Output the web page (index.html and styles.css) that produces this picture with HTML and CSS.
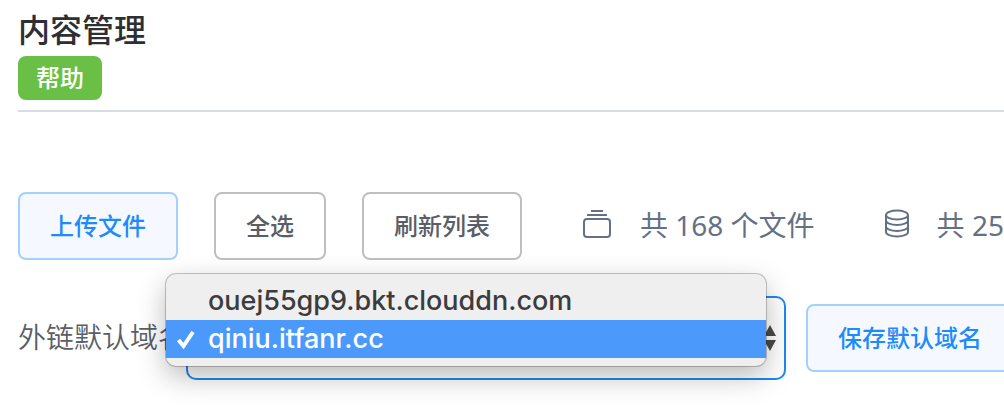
FILE: index.html
```html
<!DOCTYPE html>
<html lang="zh-CN">
<head>
<meta charset="utf-8">
<title>内容管理</title>
<link rel="stylesheet" href="styles.css">
</head>
<body>
<main class="page">
  <header class="header">
    <h1 class="title">内容管理</h1>
    <button class="help" type="button">帮助</button>
  </header>
  <section class="toolbar">
    <button class="btn btn-primary" type="button">上传文件</button>
    <button class="btn" type="button">全选</button>
    <button class="btn" type="button">刷新列表</button>
    <div class="stats">
      <div class="stat">
        <svg class="icon" width="30" height="30" viewBox="0 0 30 30" aria-hidden="true">
          <path d="M9 2h12M5 6h20"/>
          <rect x="2" y="10" width="26" height="18" rx="3"/>
        </svg>
        <span>共 168 个文件</span>
      </div>
      <div class="stat">
        <svg class="icon" width="24" height="30" viewBox="0 0 24 30" aria-hidden="true">
          <ellipse cx="12" cy="6" rx="11" ry="4.500"/>
          <path d="M1 6v17c0 2.500 4.900 4.500 11 4.500s11-2 11-4.500v-17M1 11.500c0 2.500 4.900 4.500 11 4.500s11-2 11-4.500M1 17.500c0 2.500 4.900 4.500 11 4.500s11-2 11-4.500"/>
        </svg>
        <span>共 25</span>
      </div>
    </div>
  </section>
  <section class="domain">
    <label class="label" for="domain">外链默认域名</label>
    <div class="picker">
      <select class="select" id="domain">
        <option>ouej55gp9.bkt.clouddn.com</option>
        <option selected>qiniu.itfanr.cc</option>
      </select>
      <svg class="arrows" width="12" height="28" viewBox="0 0 12 28" aria-hidden="true">
        <path d="M6 1l6 11H0zM6 27l6-11H0z"/>
      </svg>
      <div class="menu" role="listbox" aria-label="外链默认域名">
        <button class="option" type="button" role="option" aria-selected="false">ouej55gp9.bkt.clouddn.com</button>
        <button class="option option-active" type="button" role="option" aria-selected="true">
          <svg class="check" width="20" height="20" viewBox="0 0 20 20" aria-hidden="true"><path d="M2.500 11l5 6L17 3"/></svg>qiniu.itfanr.cc
        </button>
      </div>
    </div>
    <button class="btn btn-primary" type="button">保存默认域名</button>
  </section>
</main>
</body>
</html>
```
FILE: styles.css
```css
* {
  box-sizing: border-box;
}

body {
  margin: 0;
  background: #fff;
  color: #5a5e66;
  font-family: "Noto Sans", "Noto Sans CJK SC", sans-serif;
}

button,
select {
  font-family: inherit;
}

.page {
  min-height: 100vh;
  padding: 12px 0 0 18px;
  overflow: hidden;
}

.header {
  display: flex;
  flex-direction: column;
  align-items: flex-start;
  gap: 8px;
  padding-bottom: 10px;
  border-bottom: 2px solid #d8dce5;
}

.title {
  margin: 0;
  color: #2d2f33;
  font-size: 32px;
  font-weight: 500;
  line-height: 36px;
}

.help {
  height: 44px;
  padding: 0 18px;
  border: 0;
  border-radius: 8px;
  background: #6abf47;
  color: #fff;
  font-size: 24px;
  font-weight: 500;
  line-height: 44px;
}

.toolbar {
  display: flex;
  align-items: center;
  gap: 36px;
  margin-top: 80px;
  white-space: nowrap;
}

.btn {
  flex: none;
  height: 68px;
  padding: 0 30px 4px;
  border: 2px solid #bfbfbf;
  border-radius: 8px;
  background: #fff;
  color: #5a5e66;
  font-size: 24px;
  font-weight: 500;
  white-space: nowrap;
}

.btn-primary {
  border-color: #a3d0fd;
  background: #f5f9ff;
  color: #1f8bfa;
}

.stats {
  display: flex;
  gap: 70px;
  margin-left: 24px;
  padding-bottom: 4px;
  color: #657085;
  font-size: 28px;
}

.stat {
  display: flex;
  align-items: center;
  gap: 28px;
}

.icon {
  flex: none;
  fill: none;
  stroke: #657085;
  stroke-width: 2;
}

.domain {
  display: flex;
  align-items: center;
  margin-top: 36px;
}

.label {
  flex: none;
  padding-bottom: 4px;
  font-size: 28px;
  font-weight: 350;
}

.picker {
  position: relative;
  flex: none;
  width: 600px;
  margin-right: 20px;
}

.select {
  display: block;
  width: 100%;
  height: 84px;
  padding: 0 40px 0 20px;
  appearance: none;
  border: 2px solid #1f87f0;
  border-radius: 10px;
  background: #fff;
  color: #5a5e66;
  font-size: 28px;
}

.arrows {
  position: absolute;
  top: 28px;
  right: 10px;
  fill: #4a4a4a;
}

.menu {
  position: absolute;
  top: -22px;
  left: -20px;
  width: 100%;
  padding: 8px 0;
  border-radius: 10px;
  background: #efefef;
  box-shadow: 0 0 0 1px rgba(0, 0, 0, 0.22), 0 10px 28px rgba(0, 0, 0, 0.28);
}

.option {
  position: relative;
  display: block;
  width: 100%;
  height: 38px;
  padding: 0 42px;
  border: 0;
  background: transparent;
  color: #3c3c3c;
  font-family: Inter, sans-serif;
  font-size: 27px;
  font-weight: 450;
  line-height: 36px;
  text-align: left;
}

.option-active {
  background: #4b9afb;
  color: #fff;
}

.check {
  position: absolute;
  top: 9px;
  left: 10px;
  fill: none;
  stroke: #fff;
  stroke-width: 4;
}
```
